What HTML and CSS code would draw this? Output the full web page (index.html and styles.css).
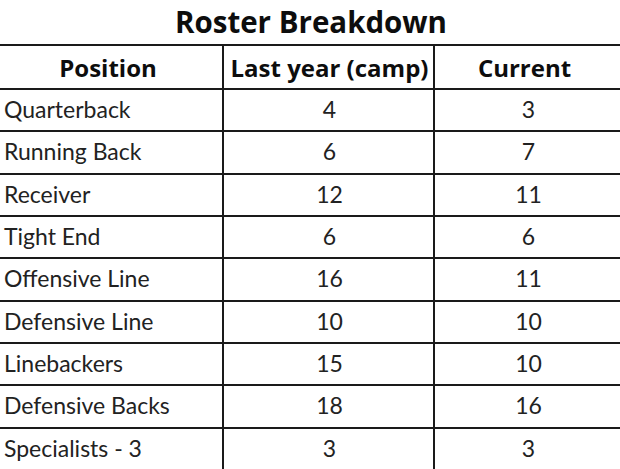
FILE: index.html
```html
<!DOCTYPE html>
<html lang="en">
<head>
<meta charset="utf-8">
<title>Roster Breakdown</title>
<link rel="stylesheet" href="styles.css">
</head>
<body>
<div class="sheet">
  <h1 class="title">Roster Breakdown</h1>
  <div class="grid">
    <div class="cell head c1">Position</div>
    <div class="cell head c2">Last year (camp)</div>
    <div class="cell head c3">Current</div>

    <div class="cell c1">Quarterback</div><div class="cell num c2">4</div><div class="cell num c3">3</div>
    <div class="cell c1">Running Back</div><div class="cell num c2">6</div><div class="cell num c3">7</div>
    <div class="cell c1">Receiver</div><div class="cell num c2">12</div><div class="cell num c3">11</div>
    <div class="cell c1">Tight End</div><div class="cell num c2">6</div><div class="cell num c3">6</div>
    <div class="cell c1">Offensive Line</div><div class="cell num c2">16</div><div class="cell num c3">11</div>
    <div class="cell c1">Defensive Line</div><div class="cell num c2">10</div><div class="cell num c3">10</div>
    <div class="cell c1">Linebackers</div><div class="cell num c2">15</div><div class="cell num c3">10</div>
    <div class="cell c1">Defensive Backs</div><div class="cell num c2">18</div><div class="cell num c3">16</div>
    <div class="cell c1">Specialists - 3</div><div class="cell num c2">3</div><div class="cell num c3">3</div>
  </div>
</div>
</body>
</html>
```
FILE: styles.css
```css
html, body {
  margin: 0;
  padding: 0;
  background: #ffffff;
  overflow: hidden;
}
.sheet {
  width: 622px;
  font-family: "Lato", "Liberation Sans", sans-serif;
  color: #222222;
}
.title {
  margin: 0;
  height: 44px;
  box-sizing: border-box;
  padding-top: 4px;
  text-align: center;
  font-family: "Open Sans", "Lato", sans-serif;
  font-size: 29.5px;
  line-height: 36px;
  font-weight: 700;
  color: #0d0d0d;
}
.grid {
  display: grid;
  grid-template-columns: 224px 211px 187px;
  grid-template-rows: 44px;
  grid-auto-rows: 42.33px;
  border-top: 2px solid #1a1a1a;
}
.cell {
  box-sizing: border-box;
  border-bottom: 2px solid #1a1a1a;
  display: flex;
  align-items: center;
  font-size: 23px;
  padding-bottom: 2px;
  white-space: nowrap;
}
.c1, .c2 {
  border-right: 2px solid #1a1a1a;
}
.c1 {
  padding-left: 4px;
}
.head {
  justify-content: center;
  font-family: "Open Sans", "Lato", sans-serif;
  font-size: 24px;
  font-weight: 700;
  color: #0d0d0d;
  padding-bottom: 0;
}
.head.c1 {
  padding-left: 0;
  padding-right: 6px;
}
.head.c2 {
  padding-left: 2px;
}
.head.c3 {
  padding-right: 8px;
}
.num {
  justify-content: center;
}
.c2.num {
  padding-left: 2px;
}
```
